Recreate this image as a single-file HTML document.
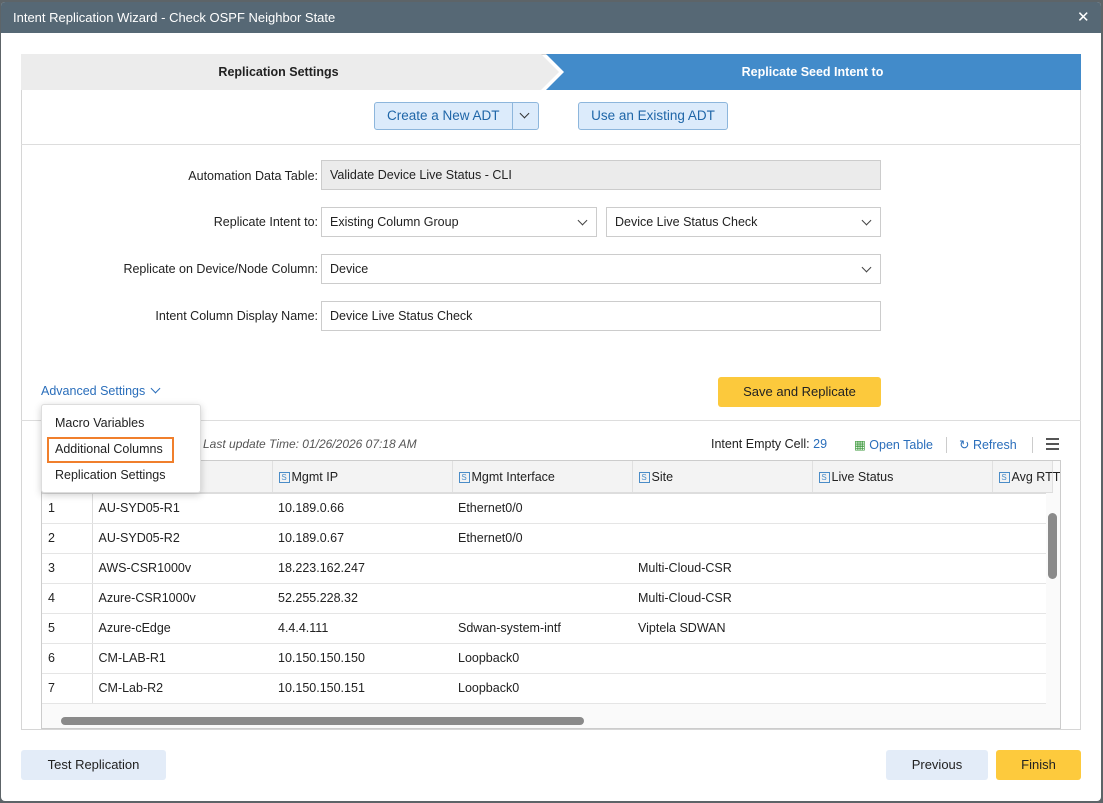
<!DOCTYPE html>
<html><head><meta charset="utf-8"><style>
*{box-sizing:border-box;margin:0;padding:0}
body{width:1103px;height:803px;background:#5d6468;font-family:"Liberation Sans",sans-serif;font-size:13px;color:#222;position:relative;overflow:hidden}
.abs{position:absolute}
.dlg{left:1px;top:2px;width:1100px;height:799px;background:#fff;border-radius:4px;overflow:hidden}
.in{position:absolute;left:-1px;top:-2px;width:1103px;height:803px}
.hdr{left:1px;top:2px;width:1100px;height:31px;background:#566875;color:#fff;font-size:13px;line-height:31px;padding-left:12px}
.panel{left:21px;top:54px;width:1060px;height:676px;border:1px solid #d6d6d6}
.lbl{text-align:right;width:200px;left:118px;line-height:28px;font-size:12.5px}
.inp{border:1px solid #ccc;height:30px;line-height:28px;padding-left:8px;font-size:12.5px;background:#fff}
.chev{position:absolute;right:10px;top:9px;width:7px;height:7px;border-right:1.3px solid #444;border-bottom:1.3px solid #444;transform:rotate(45deg)}
.btn{border:1px solid #8db6dc;background:#dcebfb;color:#1f66a8;border-radius:3px;text-align:center;font-size:13.5px}
table{border-collapse:collapse;font-size:12.5px}
td,th{height:30px;padding-left:6px;text-align:left;font-weight:normal;border-bottom:1px solid #e5e5e5;white-space:nowrap}
th{background:#f3f3f3;border-right:1px solid #e0e0e0;height:32px;border-bottom:2px solid #ddd}
td:first-child{border-right:1px solid #ddd}
.s{display:inline-block;width:11px;height:11px;border:1px solid #4a8cc7;color:#4a8cc7;font-size:8px;line-height:9px;text-align:center;margin-right:2px;vertical-align:1px}
</style></head><body>
<div class="abs dlg"><div class="in">
 <div class="abs hdr">Intent Replication Wizard - Check OSPF Neighbor State</div>
 <div class="abs" style="left:1077px;top:8px;color:#fff;font-size:15px">✕</div>
 <div class="abs panel"></div>
 <svg class="abs" style="left:21px;top:54px" width="1060" height="36">
  <polygon points="0,0 520,0 538,18 520,36 0,36" fill="#ececec"/>
  <polygon points="525,0 1060,0 1060,36 525,36 543,18" fill="#428bca"/>
 </svg>
 <div class="abs" style="left:21px;top:54px;width:515px;line-height:36px;text-align:center;font-weight:bold;font-size:12.5px">Replication Settings</div>
 <div class="abs" style="left:545px;top:54px;width:535px;line-height:36px;text-align:center;font-weight:bold;color:#fff;font-size:12.5px">Replicate Seed Intent to</div>
 <div class="abs btn" style="left:374px;top:102px;width:165px;height:28px;line-height:26px;text-align:left;padding-left:12px">Create a New ADT<span style="position:absolute;left:137px;top:0;height:26px;border-left:1px solid #8db6dc"></span><span class="chev" style="right:10px;top:7px;border-color:#333"></span></div>
 <div class="abs btn" style="left:578px;top:102px;width:150px;height:28px;line-height:26px">Use an Existing ADT</div>
 <div class="abs" style="left:21px;top:144px;width:1060px;border-top:1px solid #ddd"></div>
 <div class="abs lbl" style="top:162px">Automation Data Table:</div>
 <div class="abs inp" style="left:321px;top:160px;width:560px;background:#ebebeb">Validate Device Live Status - CLI</div>
 <div class="abs lbl" style="top:208px">Replicate Intent to:</div>
 <div class="abs inp" style="left:321px;top:207px;width:276px">Existing Column Group<span class="chev"></span></div>
 <div class="abs inp" style="left:606px;top:207px;width:275px">Device Live Status Check<span class="chev"></span></div>
 <div class="abs lbl" style="top:255px">Replicate on Device/Node Column:</div>
 <div class="abs inp" style="left:321px;top:254px;width:560px">Device<span class="chev"></span></div>
 <div class="abs lbl" style="top:302px">Intent Column Display Name:</div>
 <div class="abs inp" style="left:321px;top:301px;width:560px">Device Live Status Check</div>
 <div class="abs" style="left:41px;top:384px;color:#2a6ebb;font-size:12.5px">Advanced Settings <span style="display:inline-block;width:7px;height:7px;border-right:1.3px solid #2a6ebb;border-bottom:1.3px solid #2a6ebb;transform:rotate(45deg);margin-left:3px;vertical-align:3px"></span></div>
 <div class="abs" style="left:718px;top:377px;width:163px;height:30px;background:#fcc93c;border-radius:3px;text-align:center;line-height:30px;font-size:13px">Save and Replicate</div>
 <div class="abs" style="left:21px;top:420px;width:1060px;border-top:1px solid #ddd"></div>
 <div class="abs" style="left:203px;top:437px;font-style:italic;color:#555;font-size:12px">Last update Time: 01/26/2026 07:18 AM</div>
 <div class="abs" style="left:711px;top:437px;font-size:12.5px">Intent Empty Cell: <span style="color:#2a6ebb">29</span></div>
 <div class="abs" style="left:854px;top:437px;color:#2a6ebb;font-size:12.5px"><span style="color:#3c9a3c">▦</span> Open Table</div>
 <div class="abs" style="left:946px;top:437px;height:16px;border-left:1px solid #ccc"></div>
 <div class="abs" style="left:959px;top:437px;color:#2a6ebb;font-size:12.5px">↻ Refresh</div>
 <div class="abs" style="left:1032px;top:437px;height:16px;border-left:1px solid #ccc"></div>
 <div class="abs" style="left:1046px;top:438px;width:13px;height:12px;border-top:2px solid #555;border-bottom:2px solid #555"><div style="margin-top:3px;border-top:2px solid #555"></div></div>
 <div class="abs" style="left:41px;top:460px;width:1020px;height:269px;border:1px solid #ccc;overflow:hidden;background:#fafafa">
  <table style="width:1010px;table-layout:fixed;background:#fff">
   <colgroup><col style="width:50px"><col style="width:180px"><col style="width:180px"><col style="width:180px"><col style="width:180px"><col style="width:180px"><col style="width:60px"></colgroup>
   <tr><th></th><th></th><th><span class="s">S</span>Mgmt IP</th><th><span class="s">S</span>Mgmt Interface</th><th><span class="s">S</span>Site</th><th><span class="s">S</span>Live Status</th><th><span class="s">S</span>Avg RTT</th></tr>
   <tr><td>1</td><td>AU-SYD05-R1</td><td>10.189.0.66</td><td>Ethernet0/0</td><td></td><td></td><td></td></tr>
   <tr><td>2</td><td>AU-SYD05-R2</td><td>10.189.0.67</td><td>Ethernet0/0</td><td></td><td></td><td></td></tr>
   <tr><td>3</td><td>AWS-CSR1000v</td><td>18.223.162.247</td><td></td><td>Multi-Cloud-CSR</td><td></td><td></td></tr>
   <tr><td>4</td><td>Azure-CSR1000v</td><td>52.255.228.32</td><td></td><td>Multi-Cloud-CSR</td><td></td><td></td></tr>
   <tr><td>5</td><td>Azure-cEdge</td><td>4.4.4.111</td><td>Sdwan-system-intf</td><td>Viptela SDWAN</td><td></td><td></td></tr>
   <tr><td>6</td><td>CM-LAB-R1</td><td>10.150.150.150</td><td>Loopback0</td><td></td><td></td><td></td></tr>
   <tr><td>7</td><td>CM-Lab-R2</td><td>10.150.150.151</td><td>Loopback0</td><td></td><td></td><td></td></tr>
  </table>
  <div class="abs" style="left:1004px;top:32px;width:14px;height:225px;background:#fafafa"></div>
  <div class="abs" style="left:1006px;top:52px;width:9px;height:66px;background:#8a8a8a;border-radius:5px"></div>
  <div class="abs" style="left:0;top:248px;width:1004px;height:20px;background:#fafafa"></div>
  <div class="abs" style="left:19px;top:256px;width:523px;height:8px;background:#8a8a8a;border-radius:4px"></div>
 </div>
 <div class="abs" style="left:41px;top:404px;width:160px;height:89px;background:#fff;border:1px solid #ddd;border-radius:3px;box-shadow:0 2px 8px rgba(0,0,0,.2)">
  <div class="abs" style="left:13px;top:11px;font-size:12.5px">Macro Variables</div>
  <div class="abs" style="left:5px;top:32px;width:127px;height:26px;border:2px solid #f07f2c"></div>
  <div class="abs" style="left:13px;top:37px;font-size:12.5px">Additional Columns</div>
  <div class="abs" style="left:13px;top:63px;font-size:12.5px">Replication Settings</div>
 </div>
 <div class="abs" style="left:21px;top:750px;width:145px;height:30px;background:#e3ecf8;border-radius:3px;text-align:center;line-height:30px">Test Replication</div>
 <div class="abs" style="left:886px;top:750px;width:102px;height:30px;background:#e3ecf8;border-radius:3px;text-align:center;line-height:30px">Previous</div>
 <div class="abs" style="left:996px;top:750px;width:85px;height:30px;background:#fdca3d;border-radius:3px;text-align:center;line-height:30px">Finish</div>
</div></div>
</body></html>
